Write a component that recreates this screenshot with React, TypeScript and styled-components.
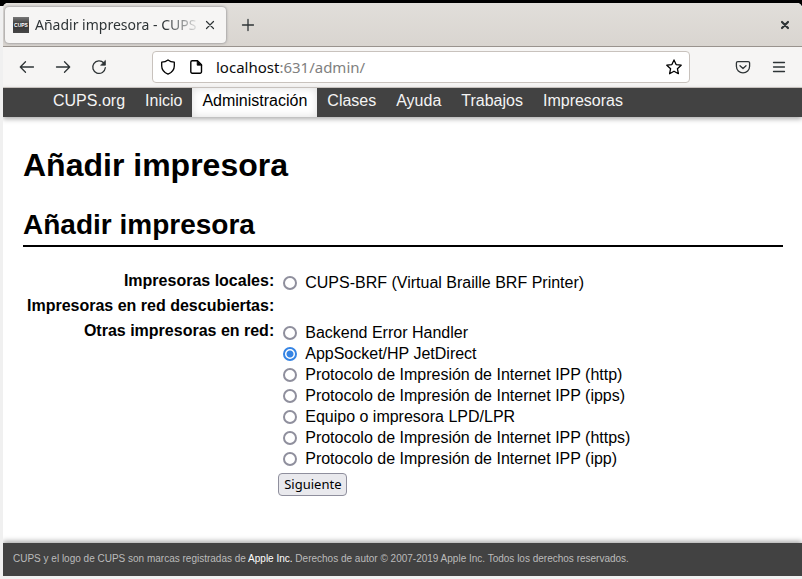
import React, { useState } from "react";
import styled, { createGlobalStyle, css } from "styled-components";

const GlobalStyle = createGlobalStyle`
  * { box-sizing: border-box; }
  body { margin: 0; background: #f0f0f0; }
`;

const uiFont = `"Noto Sans", sans-serif`;
const pageFont = `"Liberation Sans", Arial, sans-serif`;

const Desktop = styled.div`
  display: flex;
  min-height: 100vh;
  padding: 0 0 3px 3px;
  background: linear-gradient(#000, #000) top / 100% 6px no-repeat, #f0f0f0;
`;

const Window = styled.div`
  display: flex;
  flex: 1;
  flex-direction: column;
  min-width: 0;
  margin-top: 3px;
  border-radius: 5px 5px 0 0;
  overflow: hidden;
  background: #fff;
`;

const TabStrip = styled.div`
  display: flex;
  align-items: center;
  height: 44px;
  padding: 0 9px 0 2px;
  background: linear-gradient(#e1deda, #d9d5d0);
  border-bottom: 1px solid #99938e;
`;

const Tab = styled.div`
  display: flex;
  align-items: center;
  width: 221px;
  height: 36px;
  padding: 0 7px 0 8px;
  border-radius: 4px;
  background: #f6f5f4;
  box-shadow: 0 0 3px #75757a;
`;

const TabTitle = styled.span`
  flex: 1;
  margin-left: 6px;
  white-space: nowrap;
  color: #2e3436;
  font: 14px/24px ${uiFont};
  mask-image: linear-gradient(to left, transparent, #000 36px);
`;

const IconButton = styled.button`
  display: flex;
  align-items: center;
  justify-content: center;
  flex: none;
  width: 36px;
  height: 32px;
  padding: 0;
  border: 0;
  background: none;
  color: #2e3436;
`;

const CloseTab = styled(IconButton)`
  width: 18px;
`;

const NewTab = styled(IconButton)`
  margin-left: 4px;
`;

const CloseWindow = styled(IconButton)`
  width: 16px;
  margin-left: auto;
`;

const Toolbar = styled.div`
  display: flex;
  align-items: center;
  height: 41px;
  padding: 0 5px 0 6px;
  background: #f6f5f4;
  border-bottom: 1px solid #ccc6c1;
`;

const AddressBar = styled.div`
  display: flex;
  align-items: center;
  flex: 1;
  min-width: 0;
  height: 32px;
  margin: 0 35px;
  padding: 0 7px;
  gap: 12px;
  border: 1px solid #c8c2bd;
  border-radius: 4px;
  background: #fff;
`;

const Address = styled.span`
  flex: 1;
  color: #808080;
  font: 15px/24px ${uiFont};
`;

const Host = styled.span`
  color: #0c0c0d;
`;

const Nav = styled.nav`
  display: flex;
  height: 29px;
  padding-left: 40px;
  background: #424242;
  box-shadow: 0 2px 5px #aaa;
`;

const NavLink = styled.a<{ $active?: boolean }>`
  padding: 0 10px;
  color: #f4f4f4;
  font: 16px/26px ${pageFont};
  text-decoration: none;
  ${(p) =>
    p.$active &&
    css`
      background: #fff;
      color: #000;
      box-shadow: inset 0 0 8px #ddd;
    `}
`;

const Content = styled.main`
  flex: 1;
  padding: 0 19px 20px 20px;
  color: #000;
  font: 16px/18px ${pageFont};
`;

const Title = styled.h1`
  margin: 29px 0 0;
  font-size: 32px;
  line-height: 38px;
`;

const Section = styled.h2`
  margin: 22px 0 23px;
  padding-bottom: 1px;
  border-bottom: 2px solid #000;
  font-size: 28px;
  line-height: 38px;
`;

const FormTable = styled.table`
  border-spacing: 0;
`;

const RowHead = styled.th`
  height: 25px;
  padding: 2px 2px 2px 4px;
  text-align: right;
  vertical-align: top;
  white-space: nowrap;
`;

const Cell = styled.td`
  padding: 2px;
`;

const Option = styled.label`
  display: flex;
  align-items: center;
  height: 21px;
  padding-left: 5px;
  gap: 8px;
`;

const Radio = styled.input`
  appearance: none;
  flex: none;
  width: 14px;
  height: 14px;
  margin: 0;
  border: 2px solid #8f8f9d;
  border-radius: 50%;
  background: #fff;
  &:checked {
    border-color: #3584e4;
    background: radial-gradient(circle, #3584e4 3px, #fff 4px);
  }
`;

const Submit = styled.button`
  display: block;
  height: 23px;
  padding: 0 5px;
  border: 1px solid #8f8f9d;
  border-radius: 4px;
  background: #e9e9ed;
  color: #000;
  font: 13px/21px ${uiFont};
`;

const Footer = styled.footer`
  padding: 7px 10px 8px;
  background: #424242;
  box-shadow: 0 -2px 5px #aaa;
  color: #bbb;
  font: 10px/18px ${pageFont};
`;

const FooterLink = styled.a`
  color: #fff;
  text-decoration: none;
`;

const Favicon = () => (
  <svg width="16" height="16" viewBox="0 0 16 16" aria-hidden="true">
    <defs>
      <linearGradient id="shade" x2="0" y2="1">
        <stop offset="0" stopColor="#777" />
        <stop offset="0.5" stopColor="#333" />
        <stop offset="1" stopColor="#484848" />
      </linearGradient>
    </defs>
    <rect width="16" height="16" fill="url(#shade)" />
    <text x="8" y="10" textAnchor="middle" fill="#fff" fontSize="5" fontWeight="700" fontFamily="Liberation Sans, sans-serif">
      CUPS
    </text>
  </svg>
);

const Icon = ({ children, size = 16, weight = 1.3 }: { children: React.ReactNode; size?: number; weight?: number }) => (
  <svg
    width={size}
    height={size}
    viewBox="0 0 16 16"
    fill="none"
    stroke="currentColor"
    strokeWidth={weight}
    strokeLinecap="round"
    strokeLinejoin="round"
    aria-hidden="true"
  >
    {children}
  </svg>
);

const links = ["CUPS.org", "Inicio", "Administración", "Clases", "Ayuda", "Trabajos", "Impresoras"];

const groups = [
  { label: "Impresoras locales:", options: ["CUPS-BRF (Virtual Braille BRF Printer)"] },
  { label: "Impresoras en red descubiertas:", options: [] },
  {
    label: "Otras impresoras en red:",
    options: [
      "Backend Error Handler",
      "AppSocket/HP JetDirect",
      "Protocolo de Impresión de Internet IPP (http)",
      "Protocolo de Impresión de Internet IPP (ipps)",
      "Equipo o impresora LPD/LPR",
      "Protocolo de Impresión de Internet IPP (https)",
      "Protocolo de Impresión de Internet IPP (ipp)",
    ],
  },
];

export default function App() {
  const [device, setDevice] = useState("AppSocket/HP JetDirect");
  return (
    <Desktop>
      <GlobalStyle />
      <Window>
        <TabStrip>
          <Tab>
            <Favicon />
            <TabTitle>Añadir impresora - CUPS</TabTitle>
            <CloseTab aria-label="Cerrar pestaña">
              <Icon weight={1.2}><path d="M4.5 4.5l7 7M11.500 4.500l-7 7" /></Icon>
            </CloseTab>
          </Tab>
          <NewTab aria-label="Nueva pestaña">
            <Icon><path d="M8 2.500v11M2.500 8h11" /></Icon>
          </NewTab>
          <CloseWindow aria-label="Cerrar ventana">
            <Icon weight={2.2}><path d="M5 5l6 6M11 5l-6 6" /></Icon>
          </CloseWindow>
        </TabStrip>
        <Toolbar>
          <IconButton aria-label="Atrás">
            <Icon><path d="M14.500 8h-13M6.500 2.800L1.300 8l5.200 5.200" /></Icon>
          </IconButton>
          <IconButton aria-label="Adelante">
            <Icon><path d="M1.500 8h13M9.500 2.800L14.700 8l-5.200 5.200" /></Icon>
          </IconButton>
          <IconButton aria-label="Recargar">
            <Icon>
              <path d="M12.800 4A6.300 6.300 0 1 0 14.300 8.700" />
              <path d="M14.400 1.800v4.400H10z" fill="currentColor" strokeWidth="0.8" />
            </Icon>
          </IconButton>
          <AddressBar>
            <Icon><path d="M8 .9C6.200 2.300 4 3 1.700 3.200V7c0 3.600 2.200 6.400 6.300 8.200 4.100-1.800 6.300-4.600 6.300-8.200V3.200C12 3 9.800 2.300 8 .9z" /></Icon>
            <Icon weight={1.4}>
              <path d="M4.200 1.800h5.300l4 4v7a1.400 1.400 0 0 1-1.400 1.400H4.200a1.400 1.400 0 0 1-1.400-1.400V3.200a1.400 1.400 0 0 1 1.400-1.400z" />
              <path d="M9.200 2v4.200h4.200z" fill="currentColor" strokeWidth="0.8" />
            </Icon>
            <Address><Host>localhost</Host>:631/admin/</Address>
            <Icon><path d="M8 .9l2.100 4.700 5.100.6-3.800 3.500 1 5L8 12.200l-4.400 2.500 1-5L.8 6.200l5.100-.6z" /></Icon>
          </AddressBar>
          <IconButton aria-label="Guardar en Pocket">
            <Icon>
              <path d="M2.800 2.600h10.400a1.400 1.400 0 0 1 1.400 1.400v3.300a6.600 6.600 0 0 1-13.200 0V4a1.400 1.400 0 0 1 1.400-1.400z" />
              <path d="M5 6.700l3 2.800 3-2.800" />
            </Icon>
          </IconButton>
          <IconButton aria-label="Menú">
            <Icon><path d="M2.500 3.500h11M2.500 8h11M2.500 12.500h11" /></Icon>
          </IconButton>
        </Toolbar>
        <Nav>
          {links.map((link) => (
            <NavLink key={link} href="#" $active={link === "Administración"}>
              {link}
            </NavLink>
          ))}
        </Nav>
        <Content>
          <Title>Añadir impresora</Title>
          <Section>Añadir impresora</Section>
          <FormTable>
            <tbody>
              {groups.map((group) => (
                <tr key={group.label}>
                  <RowHead scope="row">{group.label}</RowHead>
                  <Cell>
                    {group.options.map((option) => (
                      <Option key={option}>
                        <Radio type="radio" name="device" checked={device === option} onChange={() => setDevice(option)} />
                        {option}
                      </Option>
                    ))}
                  </Cell>
                </tr>
              ))}
              <tr>
                <Cell />
                <Cell>
                  <Submit type="button">Siguiente</Submit>
                </Cell>
              </tr>
            </tbody>
          </FormTable>
        </Content>
        <Footer>
          CUPS y el logo de CUPS son marcas registradas de <FooterLink href="#">Apple Inc.</FooterLink> Derechos de autor ©
          2007-2019 Apple Inc. Todos los derechos reservados.
        </Footer>
      </Window>
    </Desktop>
  );
}
